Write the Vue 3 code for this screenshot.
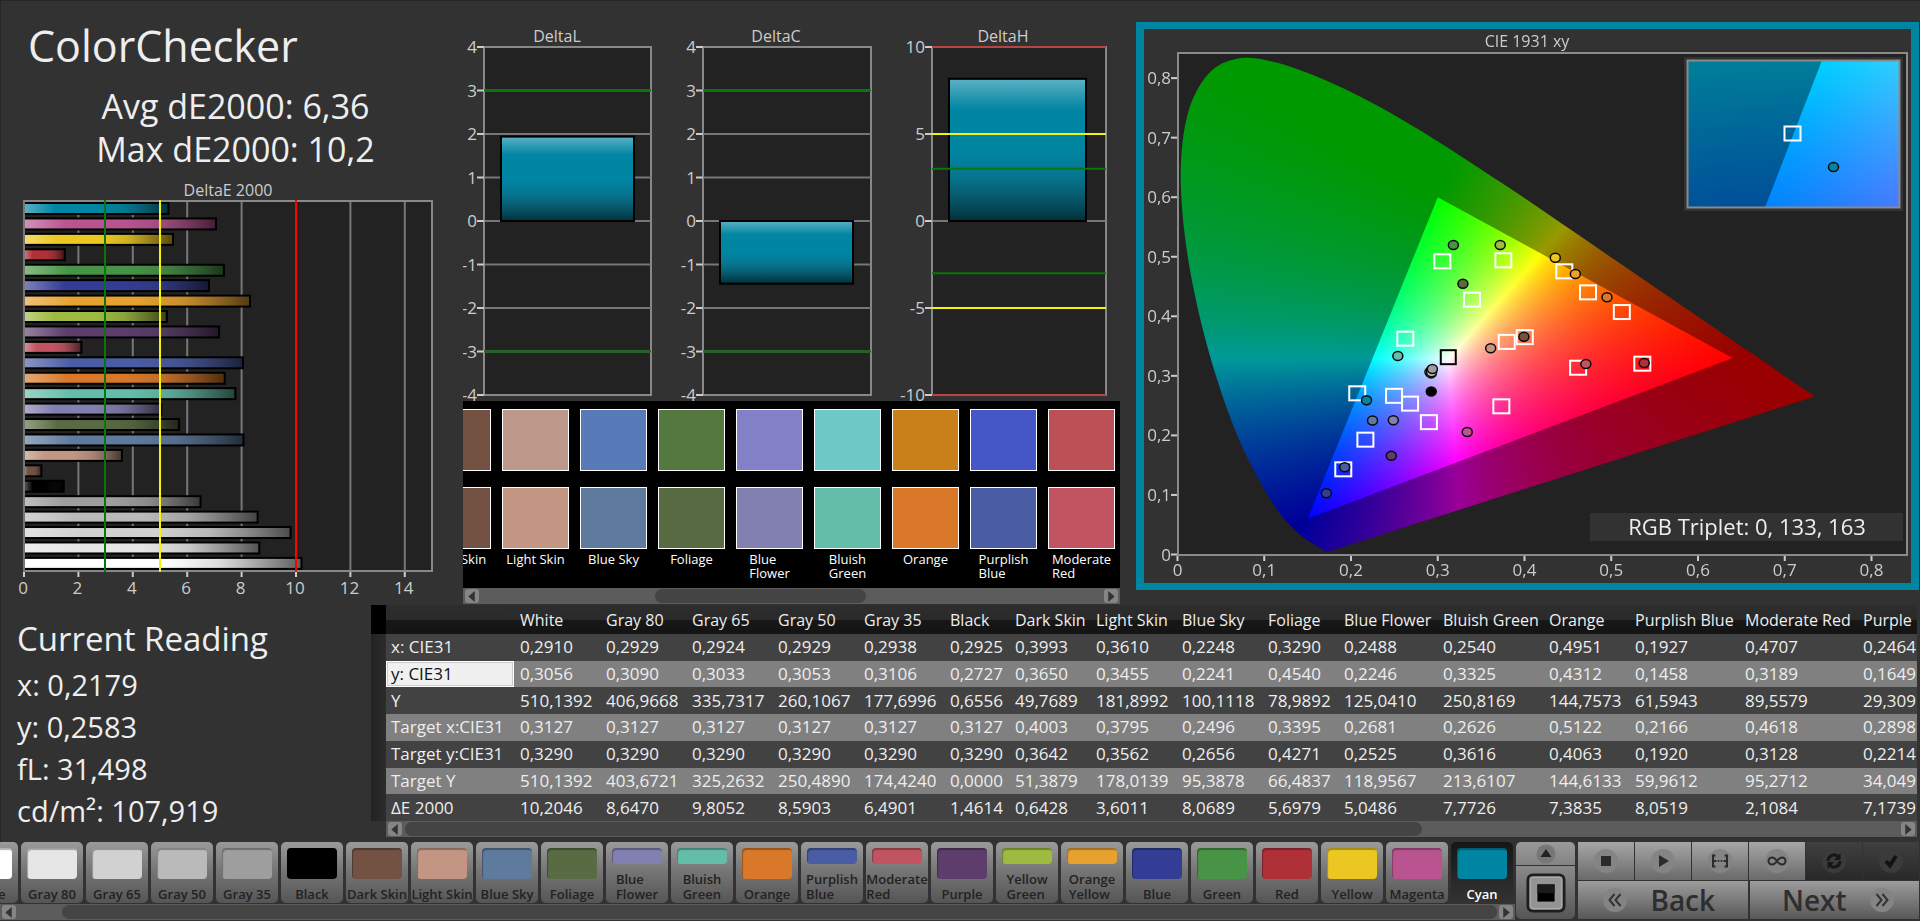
<script setup>
import { ref, onMounted } from 'vue'

const patches = [
  { name: 'White', lines: ['White'], color: '#ffffff', de: 10.2 },
  { name: 'Gray 80', lines: ['Gray 80'], color: '#e6e6e6', de: 8.65 },
  { name: 'Gray 65', lines: ['Gray 65'], color: '#d1d1d1', de: 9.8 },
  { name: 'Gray 50', lines: ['Gray 50'], color: '#bababa', de: 8.59 },
  { name: 'Gray 35', lines: ['Gray 35'], color: '#9e9e9e', de: 6.49 },
  { name: 'Black', lines: ['Black'], color: '#000000', de: 1.46 },
  { name: 'Dark Skin', lines: ['Dark Skin'], color: '#735244', de: 0.64 },
  { name: 'Light Skin', lines: ['Light Skin'], color: '#c29682', de: 3.6 },
  { name: 'Blue Sky', lines: ['Blue Sky'], color: '#5e7a9c', de: 8.07 },
  { name: 'Foliage', lines: ['Foliage'], color: '#596b42', de: 5.7 },
  { name: 'Blue Flower', lines: ['Blue', 'Flower'], color: '#8280b0', de: 5.05 },
  { name: 'Bluish Green', lines: ['Bluish', 'Green'], color: '#63bda8', de: 7.77 },
  { name: 'Orange', lines: ['Orange'], color: '#d97829', de: 7.38 },
  { name: 'Purplish Blue', lines: ['Purplish', 'Blue'], color: '#4a5ca3', de: 8.05 },
  { name: 'Moderate Red', lines: ['Moderate', 'Red'], color: '#c25461', de: 2.11 },
  { name: 'Purple', lines: ['Purple'], color: '#5c3d6b', de: 7.17 },
  { name: 'Yellow Green', lines: ['Yellow', 'Green'], color: '#9eba40', de: 5.25 },
  { name: 'Orange Yellow', lines: ['Orange', 'Yellow'], color: '#e6a12e', de: 8.31 },
  { name: 'Blue', lines: ['Blue'], color: '#333d96', de: 6.8 },
  { name: 'Green', lines: ['Green'], color: '#479447', de: 7.35 },
  { name: 'Red', lines: ['Red'], color: '#b03038', de: 1.5 },
  { name: 'Yellow', lines: ['Yellow'], color: '#edc721', de: 5.48 },
  { name: 'Magenta', lines: ['Magenta'], color: '#ba5491', de: 7.06 },
  { name: 'Cyan', lines: ['Cyan'], color: '#0085a3', de: 5.31 },
]
const bars = [...patches].reverse()
const barY = (i) => 29 + i * 15.43

const deltas = [
  { title: 'DeltaL', tx: 94, x: 21, w: 167, bx: 38, bw: 133, max: 4, ticks: [4, 3, 2, 1, 0, -1, -2, -3, -4], value: 1.94, green: [3, -3], yellow: [], red: [] },
  { title: 'DeltaC', tx: 313, x: 240, w: 168, bx: 257, bw: 133, max: 4, ticks: [4, 3, 2, 1, 0, -1, -2, -3, -4], value: -1.44, green: [3, -3], yellow: [], red: [] },
  { title: 'DeltaH', tx: 540, x: 469, w: 174, bx: 486, bw: 137, max: 10, ticks: [10, 5, 0, -5, -10], value: 8.17, green: [3, -3], yellow: [5, -5], red: [10, -10] },
]
const dy = (d, v) => 221 - (v / d.max) * 174

const comparison = [
  { lines: ['Dark Skin'], actual: '#735242', target: '#735244' },
  { lines: ['Light Skin'], actual: '#bd998c', target: '#c29682' },
  { lines: ['Blue Sky'], actual: '#597ab8', target: '#5e7a9c' },
  { lines: ['Foliage'], actual: '#547840', target: '#596b42' },
  { lines: ['Blue', 'Flower'], actual: '#8280c7', target: '#8280b0' },
  { lines: ['Bluish', 'Green'], actual: '#6ec9c7', target: '#63bda8' },
  { lines: ['Orange'], actual: '#c9801a', target: '#d97829' },
  { lines: ['Purplish', 'Blue'], actual: '#4557c7', target: '#4a5ca3' },
  { lines: ['Moderate', 'Red'], actual: '#bd5057', target: '#c25461' },
]

const columns = [
  ['White', 86], ['Gray 80', 86], ['Gray 65', 86], ['Gray 50', 86], ['Gray 35', 86], ['Black', 65],
  ['Dark Skin', 81], ['Light Skin', 86], ['Blue Sky', 86], ['Foliage', 76], ['Blue Flower', 99],
  ['Bluish Green', 106], ['Orange', 86], ['Purplish Blue', 110], ['Moderate Red', 118], ['Purple', 60],
]
const rows = [
  ['x: CIE31', '0,2910 0,2929 0,2924 0,2929 0,2938 0,2925 0,3993 0,3610 0,2248 0,3290 0,2488 0,2540 0,4951 0,1927 0,4707 0,2464'],
  ['y: CIE31', '0,3056 0,3090 0,3033 0,3053 0,3106 0,2727 0,3650 0,3455 0,2241 0,4540 0,2246 0,3325 0,4312 0,1458 0,3189 0,1649'],
  ['Y', '510,1392 406,9668 335,7317 260,1067 177,6996 0,6556 49,7689 181,8992 100,1118 78,9892 125,0410 250,8169 144,7573 61,5943 89,5579 29,309'],
  ['Target x:CIE31', '0,3127 0,3127 0,3127 0,3127 0,3127 0,3127 0,4003 0,3795 0,2496 0,3395 0,2681 0,2626 0,5122 0,2166 0,4618 0,2898'],
  ['Target y:CIE31', '0,3290 0,3290 0,3290 0,3290 0,3290 0,3290 0,3642 0,3562 0,2656 0,4271 0,2525 0,3616 0,4063 0,1920 0,3128 0,2214'],
  ['Target Y', '510,1392 403,6721 325,2632 250,4890 174,4240 0,0000 51,3879 178,0139 95,3878 66,4837 118,9567 213,6107 144,6133 59,9612 95,2712 34,049'],
  ['ΔE 2000', '10,2046 8,6470 9,8052 8,5903 6,4901 1,4614 0,6428 3,6011 8,0689 5,6979 5,0486 7,7726 7,3835 8,0519 2,1084 7,1739'],
].map(([label, v]) => ({ label, values: v.split(' ') }))

const px = (x) => 33.5 + x * 867.5
const py = (y) => 525.5 - y * 595.5

const targets = [
  [0.3053, 0.4915], [0.3756, 0.4932], [0.3395, 0.4271], [0.4459, 0.4747], [0.4732, 0.4394], [0.5122, 0.4063],
  [0.5358, 0.3196], [0.4618, 0.3128], [0.4003, 0.3642], [0.3795, 0.3562], [0.2626, 0.3616], [0.2072, 0.2698],
  [0.2496, 0.2656], [0.2681, 0.2525], [0.2898, 0.2214], [0.3733, 0.248], [0.2166, 0.192], [0.1911, 0.1422],
]
const readings = [
  [0.291, 0.3056, '#ffffff'], [0.2929, 0.309, '#e6e6e6'], [0.2924, 0.3033, '#d1d1d1'], [0.2929, 0.3053, '#bababa'],
  [0.2938, 0.3106, '#9e9e9e'], [0.2925, 0.2727, '#000000'], [0.3993, 0.365, '#735244'], [0.361, 0.3455, '#c29682'],
  [0.2248, 0.2241, '#5e7a9c'], [0.329, 0.454, '#596b42'], [0.2488, 0.2246, '#8280b0'], [0.254, 0.3325, '#63bda8'],
  [0.4951, 0.4312, '#d97829'], [0.1927, 0.1458, '#4a5ca3'], [0.4707, 0.3189, '#c25461'], [0.2464, 0.1649, '#5c3d6b'],
  [0.372, 0.519, '#9eba40'], [0.4586, 0.4702, '#e6a12e'], [0.1716, 0.1019, '#333d96'], [0.318, 0.519, '#479447'],
  [0.538, 0.3207, '#b03038'], [0.4355, 0.4976, '#edc721'], [0.334, 0.2049, '#ba5491'], [0.2179, 0.2583, '#0085a3'],
]
const ptY = (y) => py(y) - 0.5

const locus = [
  [0.1741, 0.005], [0.1714, 0.0051], [0.1689, 0.0069], [0.1644, 0.0109], [0.1566, 0.0177], [0.144, 0.0297],
  [0.1241, 0.0578], [0.1096, 0.0868], [0.0913, 0.1327], [0.0687, 0.2007], [0.0454, 0.295], [0.0235, 0.4127],
  [0.0082, 0.5384], [0.0039, 0.6548], [0.0139, 0.7502], [0.0389, 0.812], [0.0743, 0.8338], [0.1142, 0.8262],
  [0.1547, 0.8059], [0.1929, 0.7816], [0.2296, 0.7543], [0.2658, 0.7243], [0.3016, 0.6923], [0.3731, 0.6245],
  [0.4441, 0.5547], [0.5125, 0.4866], [0.5752, 0.4242], [0.627, 0.3725], [0.6658, 0.334], [0.6915, 0.3083],
  [0.719, 0.2809], [0.7347, 0.2653],
]
const gamut = [[0.64, 0.33], [0.3, 0.6], [0.15, 0.06]]

const cieCanvas = ref(null)

// Chromaticity to RGB, scaled so the strongest channel reaches the given level.
function colorAt(x, y, level) {
  const z = 1 - x - y
  const c = [
    3.2406 * x - 1.5372 * y - 0.4986 * z,
    -0.9689 * x + 1.8758 * y + 0.0415 * z,
    0.0557 * x - 0.204 * y + 1.057 * z,
  ].map((v) => Math.max(0, v))
  const m = Math.max(...c) || 1
  return c.map((v) => (v / m) * 255 * level)
}

function layer(w, h, toX, toY, level) {
  const c = document.createElement('canvas')
  c.width = w
  c.height = h
  const g = c.getContext('2d')
  const img = g.createImageData(w, h)
  for (let j = 0; j < h; j++) {
    for (let i = 0; i < w; i++) {
      const rgb = colorAt(toX(i), toY(j), level)
      const o = (j * w + i) * 4
      img.data[o] = rgb[0]
      img.data[o + 1] = rgb[1]
      img.data[o + 2] = rgb[2]
      img.data[o + 3] = 255
    }
  }
  g.putImageData(img, 0, 0)
  return c
}

function smoothClosedPath(g, pts) {
  g.beginPath()
  g.moveTo(...pts[0])
  for (let i = 0; i < pts.length - 1; i++) {
    const a = pts[Math.max(0, i - 1)]
    const b = pts[i]
    const c = pts[i + 1]
    const d = pts[Math.min(pts.length - 1, i + 2)]
    g.bezierCurveTo(
      b[0] + (c[0] - a[0]) / 6, b[1] + (c[1] - a[1]) / 6,
      c[0] - (d[0] - b[0]) / 6, c[1] - (d[1] - b[1]) / 6,
      c[0], c[1],
    )
  }
  g.closePath()
}

function polygon(g, pts) {
  g.beginPath()
  pts.forEach((p, i) => (i ? g.lineTo(...p) : g.moveTo(...p)))
  g.closePath()
}

onMounted(() => {
  const g = cieCanvas.value.getContext('2d')
  const toX = (i) => (i + 0.5 - 33.5) / 867.5
  const toY = (j) => (525.5 - j - 0.5) / 595.5
  g.fillStyle = '#222222'
  g.fillRect(33, 24, 730, 502)
  g.save()
  smoothClosedPath(g, locus.map(([x, y]) => [px(x), py(y)]))
  g.clip()
  g.drawImage(layer(767, 554, toX, toY, 0.6), 0, 0)
  g.restore()
  g.save()
  polygon(g, gamut.map(([x, y]) => [px(x), py(y)]))
  g.clip()
  g.drawImage(layer(767, 554, toX, toY, 1), 0, 0)
  g.restore()

  // Magnified window around the selected patch.
  g.fillStyle = '#323232'
  g.fillRect(540, 28, 219, 154)
  const w = 213
  const h = 148
  const cx = 0.2089
  const cy = 0.272
  const spanX = 0.062
  const spanY = 0.06
  const ix = (i) => cx + ((i - w / 2) / w) * spanX
  const iy = (j) => cy - ((j - h / 2) / h) * spanY
  g.drawImage(layer(w, h, ix, iy, 0.6), 543, 31)
  g.save()
  g.beginPath()
  g.rect(543, 31, w, h)
  g.clip()
  polygon(g, gamut.map(([x, y]) => [543 + w / 2 + ((x - cx) / spanX) * w, 31 + h / 2 - ((y - cy) / spanY) * h]))
  g.clip()
  g.drawImage(layer(w, h, ix, iy, 1), 543, 31)
  g.restore()
})
</script>

<template>
  <main class="app">
    <section class="top">
      <div class="summary">
        <h1>ColorChecker</h1>
        <p class="stat">Avg dE2000: 6,36<br>Max dE2000: 10,2</p>
        <svg class="chart" viewBox="0 0 463 426" role="img" aria-label="DeltaE 2000">
          <defs>
            <linearGradient id="gloss-x">
              <stop offset="0" stop-color="#fff" stop-opacity=".36" />
              <stop offset=".22" stop-color="#fff" stop-opacity="0" />
              <stop offset=".5" stop-color="#333" stop-opacity="0" />
              <stop offset=".7" stop-color="#222" stop-opacity=".15" />
              <stop offset="1" stop-color="#000" stop-opacity=".64" />
            </linearGradient>
            <linearGradient id="gloss-y" x2="0" y2="1">
              <stop offset="0" stop-color="#fff" stop-opacity=".36" />
              <stop offset=".22" stop-color="#fff" stop-opacity="0" />
              <stop offset=".5" stop-color="#333" stop-opacity="0" />
              <stop offset=".68" stop-color="#222" stop-opacity=".15" />
              <stop offset="1" stop-color="#000" stop-opacity=".64" />
            </linearGradient>
          </defs>
          <text class="caption" x="228" y="22" text-anchor="middle">DeltaE 2000</text>
          <rect class="plot" x="24" y="27" width="408" height="370" />
          <g v-for="n in 7" :key="n">
            <line class="grid" :x1="24 + n * 54.4" y1="28" :x2="24 + n * 54.4" y2="396" />
          </g>
          <g v-for="(b, i) in bars" :key="b.name">
            <rect :x="24" :y="barY(i)" :width="b.de * 27.2" height="11" :fill="b.color" />
            <rect class="bar" x="24" :y="barY(i)" :width="b.de * 27.2" height="11" fill="url(#gloss-x)" />
          </g>
          <line class="frame" x1="24" y1="27" x2="24" y2="398" />
          <g v-for="n in 8" :key="n">
            <line class="tick" :x1="24 + (n - 1) * 54.4" y1="398" :x2="24 + (n - 1) * 54.4" y2="403" />
            <text class="axis" :x="23 + (n - 1) * 54.4" y="420" text-anchor="middle">{{ (n - 1) * 2 }}</text>
          </g>
          <line class="mark green" x1="105" y1="26" x2="105" y2="398" />
          <line class="mark yellow" x1="160" y1="26" x2="160" y2="398" />
          <line class="mark red" x1="296" y1="26" x2="296" y2="398" />
        </svg>
      </div>

      <div class="middle">
        <svg class="chart" viewBox="0 0 657 401" role="img" aria-label="DeltaL, DeltaC and DeltaH">
          <g v-for="d in deltas" :key="d.title">
            <text class="caption" :x="d.tx" y="42" text-anchor="middle">{{ d.title }}</text>
            <rect class="plot" :x="d.x" y="47" :width="d.w" height="348" />
            <g v-for="t in d.ticks" :key="t">
              <line v-if="Math.abs(t) < d.max" class="grid" :x1="d.x" :x2="d.x + d.w" :y1="dy(d, t)" :y2="dy(d, t)" />
              <line class="tick" :x1="d.x - 7" :x2="d.x" :y1="dy(d, t)" :y2="dy(d, t)" />
              <text class="axis" :x="d.x - 7" :y="dy(d, t) + 6" text-anchor="end">{{ t }}</text>
            </g>
            <rect fill="#0085a3" :x="d.bx" :y="Math.min(dy(d, d.value), 221)" :width="d.bw" :height="Math.abs(dy(d, d.value) - 221)" />
            <rect class="bar" fill="url(#gloss-y)" :x="d.bx" :y="Math.min(dy(d, d.value), 221)" :width="d.bw" :height="Math.abs(dy(d, d.value) - 221)" />
            <line v-for="m in d.green" :key="'g' + m" class="mark green" :x1="d.x" :x2="d.x + d.w" :y1="dy(d, m)" :y2="dy(d, m)" />
            <line v-for="m in d.yellow" :key="'y' + m" class="mark yellow" :x1="d.x" :x2="d.x + d.w" :y1="dy(d, m)" :y2="dy(d, m)" />
            <line v-for="m in d.red" :key="'r' + m" class="mark limit" :x1="d.x" :x2="d.x + d.w" :y1="dy(d, m)" :y2="dy(d, m)" />
          </g>
        </svg>
        <div class="compare">
          <div v-for="c in comparison" :key="c.target" class="pair">
            <i class="chip" :style="{ background: c.actual }"></i>
            <i class="chip" :style="{ background: c.target }"></i>
            <span><template v-for="(l, i) in c.lines" :key="l"><br v-if="i">{{ l }}</template></span>
          </div>
        </div>
        <div class="scroll">
          <button type="button" aria-label="Scroll left"><svg viewBox="0 0 8 12"><path d="M7 0V12L0 6z" /></svg></button>
          <div class="track"><i class="thumb thumb-mid"></i></div>
          <button type="button" aria-label="Scroll right"><svg viewBox="0 0 8 12"><path d="M1 0V12L8 6z" /></svg></button>
        </div>
      </div>

      <div class="cie">
        <canvas ref="cieCanvas" width="767" height="554"></canvas>
        <svg viewBox="0 0 767 554" role="img" aria-label="CIE 1931 xy">
          <text class="caption" x="383" y="18" text-anchor="middle">CIE 1931 xy</text>
          <rect class="outline" x="34" y="24" width="729" height="502" />
          <g v-for="n in 9" :key="n">
            <line class="tick" :x1="px((n - 1) / 10)" :x2="px((n - 1) / 10)" y1="527" y2="532" />
            <text class="axis" :x="px((n - 1) / 10)" y="547" text-anchor="middle">{{ n === 1 ? '0' : '0,' + (n - 1) }}</text>
            <line class="tick" x1="27" x2="33" :y1="py((n - 1) / 10)" :y2="py((n - 1) / 10)" />
            <text class="axis" x="27" :y="py((n - 1) / 10) + 6" text-anchor="end">{{ n === 1 ? '0' : '0,' + (n - 1) }}</text>
          </g>
          <rect v-for="(t, i) in targets" :key="'t' + i" class="target" :x="px(t[0]) - 8" :y="ptY(t[1]) - 7" width="16" height="14" />
          <rect class="target white-point" :x="px(0.3127) - 8" :y="ptY(0.3305) - 7" width="15" height="14" />
          <ellipse v-for="(r, i) in readings" :key="'r' + i" class="reading" :cx="px(r[0])" :cy="ptY(r[1])" rx="5" ry="4.5" :fill="r[2]" />
          <rect class="outline" x="543.5" y="31.5" width="212" height="147" />
          <rect class="target" x="640.5" y="97.5" width="16" height="14" />
          <ellipse class="reading" cx="689.5" cy="138" rx="5" ry="4.5" fill="#0085a3" />
          <rect x="446" y="484" width="313" height="28" fill="#323232" />
          <text class="triplet" x="603" y="506" text-anchor="middle">RGB Triplet: 0, 133, 163</text>
        </svg>
      </div>
    </section>

    <section class="data">
      <div class="reading-box">
        <h2>Current Reading</h2>
        <p>x: 0,2179<br>y: 0,2583<br>fL: 31,498<br>cd/m²: 107,919</p>
      </div>
      <div class="table-box">
        <table>
          <colgroup>
            <col style="width: 15px">
            <col style="width: 128px">
            <col v-for="c in columns" :key="c[0]" :style="{ width: c[1] + 'px' }">
          </colgroup>
          <thead>
            <tr>
              <td class="stub"></td>
              <th></th>
              <th v-for="c in columns" :key="c[0]" scope="col">{{ c[0] }}</th>
            </tr>
          </thead>
          <tbody>
            <tr v-for="(r, i) in rows" :key="r.label">
              <td class="stub"></td>
              <th scope="row" :class="{ selected: i === 1 }">{{ r.label }}</th>
              <td v-for="(v, j) in r.values" :key="j">{{ v }}</td>
            </tr>
          </tbody>
        </table>
        <div class="scroll table-scroll">
          <button type="button" aria-label="Scroll left"><svg viewBox="0 0 8 12"><path d="M7 0V12L0 6z" /></svg></button>
          <div class="track"><i class="thumb thumb-table"></i></div>
          <button type="button" aria-label="Scroll right"><svg viewBox="0 0 8 12"><path d="M1 0V12L8 6z" /></svg></button>
        </div>
      </div>
    </section>

    <section class="bottom">
      <div class="strip">
        <div class="tiles">
          <button v-for="p in patches" :key="p.name" type="button" class="tile" :class="{ active: p.name === 'Cyan' }">
            <i class="swatch" :style="{ background: p.color }"></i>
            <span><template v-for="(l, i) in p.lines" :key="l"><br v-if="i">{{ l }}</template></span>
          </button>
        </div>
        <div class="scroll">
          <button type="button" aria-label="Scroll left"><svg viewBox="0 0 8 12"><path d="M7 0V12L0 6z" /></svg></button>
          <div class="track"><i class="thumb thumb-strip"></i></div>
          <button type="button" aria-label="Scroll right"><svg viewBox="0 0 8 12"><path d="M1 0V12L8 6z" /></svg></button>
        </div>
      </div>
      <div class="pattern">
        <button type="button" class="up" aria-label="Expand">
          <svg viewBox="0 0 20 20"><circle cx="10" cy="10" r="9.5" fill="#777" /><path d="M10 5L15.500 13H4.500z" fill="#222" /></svg>
        </button>
        <button type="button" class="window" aria-label="Window pattern">
          <svg viewBox="0 0 42 42">
            <rect x="2" y="2" width="38" height="38" rx="5" fill="#949494" stroke="#1e1e1e" stroke-width="3" />
            <rect x="4.500" y="4.500" width="33" height="33" rx="3" fill="none" stroke="#b0b0b0" />
            <rect x="12" y="12" width="18" height="18" fill="#000" />
            <rect x="12" y="12" width="18" height="9" fill="#1b1b1b" />
          </svg>
        </button>
      </div>
      <div class="controls">
        <div class="icons">
          <button type="button" aria-label="Stop">
            <svg viewBox="0 0 26 26"><circle cx="13" cy="13" r="12" /><rect x="8" y="8" width="10" height="10" fill="#2b2b2b" /></svg>
          </button>
          <button type="button" aria-label="Play">
            <svg viewBox="0 0 26 26"><circle cx="13" cy="13" r="12" /><path d="M9 7L19 13L9 19z" fill="#2b2b2b" /></svg>
          </button>
          <button type="button" aria-label="Series">
            <svg viewBox="0 0 26 26"><circle cx="13" cy="13" r="12" /><path d="M8.500 7.500H6V18.500H8.500M17.500 7.500H20V18.500H17.500" fill="none" stroke="#2b2b2b" stroke-width="2" /><path d="M7 13H9.500M16.500 13H19M10.800 13H12.300M13.700 13H15.200" stroke="#2b2b2b" stroke-width="2" /></svg>
          </button>
          <button type="button" aria-label="Continuous">
            <svg viewBox="0 0 26 26"><circle cx="13" cy="13" r="12" /><path d="M13 13C11 10 9.500 9.500 8 9.500A3.500 3.500 0 0 0 8 16.500C9.500 16.500 11 16 13 13C15 10 16.500 9.500 18 9.500A3.500 3.500 0 0 1 18 16.500C16.500 16.500 15 16 13 13z" fill="none" stroke="#2b2b2b" stroke-width="2" /></svg>
          </button>
          <button type="button" class="dark" aria-label="Refresh">
            <svg viewBox="0 0 26 26"><circle cx="13" cy="13" r="12" /><path d="M7 13A6 6 0 0 1 17 8.500M19 13A6 6 0 0 1 9 17.500" fill="none" stroke="#161616" stroke-width="3" /><path d="M19.500 5V12H13zM6.500 21V14H13z" fill="#161616" /></svg>
          </button>
          <button type="button" class="dark" aria-label="Accept">
            <svg viewBox="0 0 26 26"><circle cx="13" cy="13" r="12" /><path d="M8 13L12 17.500L18 8" fill="none" stroke="#131313" stroke-width="4" /></svg>
          </button>
        </div>
        <div class="steps">
          <button type="button" class="back">
            <svg viewBox="0 0 26 26"><circle cx="13" cy="13" r="12" /><path d="M12.500 7L7.500 13L12.500 19M18.500 7L13.500 13L18.500 19" fill="none" stroke="#333" stroke-width="2" /></svg>
            Back
          </button>
          <button type="button" class="next">
            Next
            <svg viewBox="0 0 26 26"><circle cx="13" cy="13" r="12" /><path d="M7.500 7L12.500 13L7.500 19M13.500 7L18.500 13L13.500 19" fill="none" stroke="#333" stroke-width="2" /></svg>
          </button>
        </div>
      </div>
    </section>
  </main>
</template>

<style>
body {
  margin: 0;
  background: #323232;
}
</style>

<style scoped>
.app {
  box-sizing: border-box;
  min-height: 100vh;
  background: #323232;
  box-shadow: inset 1px 1px #262626;
  color: #eee;
  font-family: "Open Sans", "Noto Sans", sans-serif;
  overflow: hidden;
}
button {
  margin: 0;
  padding: 0;
  border: 0;
  font: inherit;
  color: inherit;
}
svg {
  display: block;
}
i {
  display: block;
}

.top {
  display: grid;
  grid-template-columns: minmax(0, 463fr) minmax(0, 657fr) minmax(0, 800fr);
  align-items: start;
}
h1,
h2,
p {
  margin: 0;
  font-weight: 400;
}
h1 {
  padding: 16px 0 0 28px;
  font-size: 43px;
  line-height: 60px;
}
.stat {
  padding: 9px 0 3px 8px;
  font-size: 34px;
  line-height: 43px;
  text-align: center;
}
.chart {
  width: 100%;
}
.caption {
  font-size: 16px;
  fill: #ccc;
}
.axis {
  font-size: 17px;
  fill: #ccc;
}
.plot {
  fill: #222;
  stroke: #888;
  stroke-width: 2;
}
.outline {
  fill: none;
  stroke: #8a8a8a;
  stroke-width: 2;
}
.grid,
.frame {
  stroke: #777;
  stroke-width: 2;
}
.tick {
  stroke: #ccc;
  stroke-width: 2;
}
.bar {
  stroke: #000;
  stroke-width: 2;
}
.mark {
  stroke-width: 2;
}
.green {
  stroke: #0a750a;
}
.yellow {
  stroke: #f2f20c;
}
.red {
  stroke: #f00;
}
.limit {
  stroke: #b84545;
}

.compare {
  display: flex;
  justify-content: flex-end;
  gap: 11px;
  box-sizing: border-box;
  height: 187px;
  padding: 8px 5px 0 0;
  background: #000;
  overflow: hidden;
}
.pair {
  display: flex;
  flex-direction: column;
  align-items: center;
  flex: 0 0 67px;
  font-size: 13px;
  line-height: 14px;
  white-space: nowrap;
  color: #fff;
}
.chip {
  box-sizing: border-box;
  width: 67px;
  height: 62px;
  margin-bottom: 16px;
  border: 1px solid #fff;
}
.chip + .chip {
  margin-bottom: 3px;
}

.scroll {
  display: flex;
  box-sizing: border-box;
  height: 16px;
  padding: 1px 2px;
  gap: 2px;
  background: #5c5c5c;
}
.scroll button {
  display: flex;
  align-items: center;
  justify-content: center;
  width: 14px;
  border-radius: 3px;
  background: #858585;
}
.scroll button svg {
  width: 8px;
  height: 11px;
  fill: #333;
}
.track {
  flex: 1;
}
.thumb {
  height: 14px;
  border-radius: 7px;
  background: #444;
}
.thumb-mid {
  width: 34%;
  margin-left: 28%;
}
.thumb-table {
  width: 68%;
  margin-left: 1px;
}
.thumb-strip {
  width: 97%;
  margin-left: 3%;
}

.cie {
  display: grid;
  margin: 22px 1px 0 16px;
  border: 7px solid #0085a3;
  border-width: 7px 8px;
}
.cie > * {
  grid-area: 1 / 1;
  width: 100%;
}
.target {
  fill: none;
  stroke: #fff;
  stroke-width: 2;
}
.white-point {
  stroke: #000;
}
.reading {
  stroke: #0a0a0a;
  stroke-width: 1.5;
}
.triplet {
  font-size: 22px;
  fill: #eee;
}

.data {
  display: grid;
  grid-template-columns: minmax(0, 371fr) minmax(0, 1549fr);
  margin-top: 1px;
}
.reading-box {
  padding: 12px 0 0 17px;
  white-space: nowrap;
}
h2 {
  font-size: 33px;
  line-height: 44px;
}
.reading-box p {
  padding-top: 3px;
  font-size: 29px;
  line-height: 42px;
}
.table-box {
  padding-right: 3px;
}
table {
  width: 100%;
  height: 216px;
  table-layout: fixed;
  border-collapse: collapse;
  font-size: 17px;
  line-height: 24px;
}
th,
td {
  padding: 0 0 0 6px;
  font-weight: 400;
  text-align: left;
  white-space: nowrap;
  overflow: hidden;
}
thead tr {
  height: 29px;
  background: linear-gradient(#2d2d2d, #2a2a2a 50%, #171717 51%, #141414);
}
thead th {
  font-size: 16px;
}
thead .stub {
  background: #000;
}
tbody tr {
  background: #424242;
}
tbody tr:nth-child(even) {
  background: #808080;
}
tbody th {
  padding-left: 5px;
}
tbody .stub {
  background: linear-gradient(90deg, #222, #2c2c2c);
}
.selected {
  background: #f0f0f0;
  color: #111;
  box-shadow: inset 0 0 0 1px #fff, inset 0 0 0 2px #ccc;
}
.table-scroll {
  margin-left: 15px;
}

.bottom {
  display: grid;
  grid-template-columns: minmax(0, 1515fr) minmax(0, 61fr) minmax(0, 344fr);
  height: 78px;
  margin-top: 5px;
}
.tiles {
  display: flex;
  justify-content: flex-end;
  gap: 3px;
  height: 62px;
  padding-right: 2px;
  overflow: hidden;
}
.tile {
  display: flex;
  flex: 0 0 62px;
  flex-direction: column;
  align-items: center;
  justify-content: space-between;
  box-sizing: border-box;
  height: 61px;
  padding: 6px 0 1px;
  border-radius: 5px;
  background: linear-gradient(#9a9a9a, #777 45%, #555);
  color: #222;
  font-size: 13px;
  font-weight: 600;
  line-height: 15px;
  text-align: left;
  white-space: nowrap;
}
.tile.active {
  background: linear-gradient(#161616, #333);
  color: #fff;
}
.swatch {
  flex: 1;
  width: 50px;
  margin-bottom: 8px;
  border-radius: 4px;
  box-shadow: inset 1px 2px 1px rgba(0, 0, 0, 0.3);
}

.pattern {
  display: grid;
  grid-template-rows: 23px 53px;
  gap: 1px;
  margin: 0 1px;
}
.up,
.window {
  display: flex;
  align-items: center;
  justify-content: center;
  border-radius: 5px 5px 0 0;
  background: linear-gradient(#999, #848484);
}
.window {
  border-radius: 0 0 5px 5px;
  background: linear-gradient(#8a8a8a, #555);
}
.up svg {
  width: 20px;
}
.window svg {
  width: 40px;
}
.controls {
  display: grid;
  grid-template-rows: 38px 38px;
  gap: 1px;
  margin: 0 1px 0 2px;
}
.icons {
  display: grid;
  grid-template-columns: repeat(6, 1fr);
  gap: 1px;
}
.steps {
  display: grid;
  grid-template-columns: 1fr 1fr;
  gap: 2px;
}
.icons button,
.steps button {
  display: flex;
  align-items: center;
  justify-content: center;
  background: linear-gradient(#a6a6a6, #6a6a6a);
}
.icons button.dark {
  background: linear-gradient(#404040, #282828);
}
.icons svg,
.steps svg {
  width: 26px;
}
.controls circle {
  fill: #848484;
}
.controls .dark circle {
  fill: #3b3b3b;
}
.steps button {
  gap: 22px;
  background: linear-gradient(#9c9c9c, #585858);
  color: #2e2e2e;
  font-size: 28px;
  font-weight: 600;
  line-height: 36px;
}
.steps .back {
  padding-right: 8px;
}
.steps .next {
  padding-left: 8px;
}
</style>
